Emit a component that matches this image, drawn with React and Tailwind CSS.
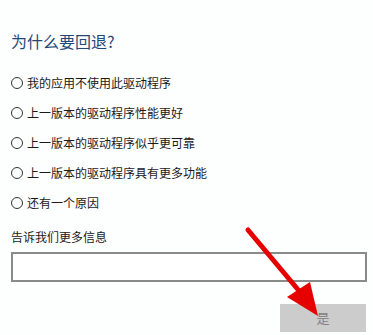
import React from 'react'

const reasons = [
    '我的应用不使用此驱动程序',
    '上一版本的驱动程序性能更好',
    '上一版本的驱动程序似乎更可靠',
    '上一版本的驱动程序具有更多功能',
    '还有一个原因',
]

const font = { fontFamily: '"Noto Sans CJK SC", "Noto Sans", sans-serif' }

const App = () => {
    return (
        <div
            className="relative w-[373px] h-[335px] overflow-hidden bg-[#fdfefe] px-[11px] text-[#1a1a1a]"
            style={font}
        >
            {/* Heading */}
            <h2 className="pt-[29px] text-[16px] leading-[24px] text-[#1f4a78]">为什么要回退?</h2>

            {/* Reasons */}
            <div className="mt-[15px] flex flex-col">
                {reasons.map((r) => (
                    <label key={r} className="h-[30px] flex items-center gap-[4px] text-[12px] leading-[18px]">
                        <span className="w-[12px] h-[12px] rounded-full border border-[#333] shrink-0" />
                        {r}
                    </label>
                ))}
            </div>

            {/* More info */}
            <div className="mt-[10px] text-[12px] leading-[18px]">告诉我们更多信息</div>
            <div className="mt-[6px] h-[30px] w-[356px] border-2 border-[#8a8a8a] bg-white" />

            <div className="mt-[22px] flex justify-end">
                <button className="mr-[-4px] w-[86px] h-[28px] bg-[#cccccc] text-[13px] text-[#808080]">是</button>
            </div>

            {/* Red arrow */}
            <svg className="absolute left-0 top-0 pointer-events-none" width="373" height="335">
                <line x1="248" y1="230" x2="300" y2="292" stroke="#e60000" strokeWidth="5" strokeLinecap="round" />
                <polygon points="287,297 310,282 318,316" fill="#e60000" />
            </svg>
        </div>
    )
}

export default App
